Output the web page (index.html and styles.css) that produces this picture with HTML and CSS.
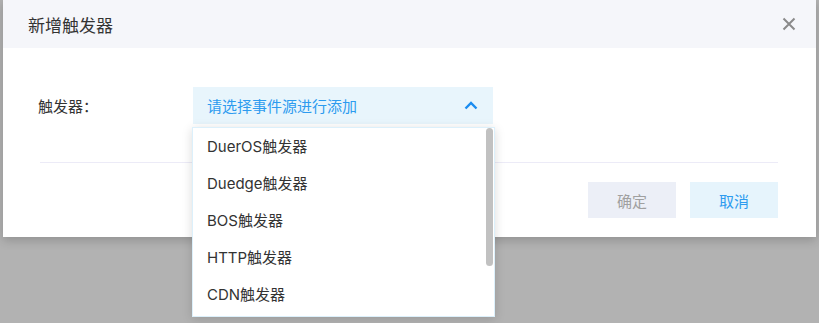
FILE: index.html
```html
<!DOCTYPE html>
<html lang="zh-CN">
<head>
    <meta charset="UTF-8">
    <title>新增触发器</title>
    <link rel="stylesheet" href="styles.css">
</head>
<body>
<div class="mask">
    <div class="dialog">
        <div class="dialog_head">
            <span class="dialog_title">新增触发器</span>
            <span class="dialog_close">
                <svg width="14" height="14" viewBox="0 0 14 14">
                    <path d="M1.5 1.5 L12.5 12.5 M12.5 1.5 L1.5 12.5" stroke="#8a8a8a" stroke-width="2" fill="none"/>
                </svg>
            </span>
        </div>
        <div class="dialog_body">
            <div class="form_row">
                <label class="form_label">触发器：</label>
                <div class="select">
                    <div class="select_box">
                        <span>请选择事件源进行添加</span>
                        <svg width="14" height="9" viewBox="0 0 14 9">
                            <path d="M1.5 7.5 L7 2 L12.5 7.5" stroke="#1a8cf0" stroke-width="2.4" fill="none"/>
                        </svg>
                    </div>
                    <div class="select_menu">
                        <ul class="select_list">
                            <li>DuerOS触发器</li>
                            <li>Duedge触发器</li>
                            <li>BOS触发器</li>
                            <li>HTTP触发器</li>
                            <li>CDN触发器</li>
                        </ul>
                        <div class="select_thumb"></div>
                    </div>
                </div>
            </div>
        </div>
        <div class="dialog_foot">
            <button class="btn btn_ok">确定</button>
            <button class="btn btn_cancel">取消</button>
        </div>
    </div>
</div>
</body>
</html>
```

FILE: styles.css
```css
body {
    margin: 0;
    font-family: "Inter", "Noto Sans CJK SC", sans-serif;
    color: #333333;
}

.mask {
    height: 323px;
    background-color: #b2b2b2;
    overflow: hidden;
    padding-left: 3px;
    padding-right: 3px;
}

.dialog {
    background-color: #ffffff;
    box-shadow: 0 3px 10px rgba(0, 0, 0, 0.2);
}

.dialog_head {
    height: 48px;
    background-color: #f5f6fa;
    display: flex;
    align-items: center;
    justify-content: space-between;
    padding: 0 20px 0 25px;
}

.dialog_title {
    font-size: 17px;
    color: #333333;
}

.dialog_close {
    display: flex;
}

.dialog_body {
    padding: 39px 38px 0 35px;
}

.form_row {
    display: flex;
    align-items: center;
    height: 37px;
}

.form_label {
    width: 155px;
    font-size: 15px;
    color: #333333;
}

.select {
    position: relative;
    width: 300px;
}

.select_box {
    height: 37px;
    background-color: #e8f5fc;
    display: flex;
    align-items: center;
    justify-content: space-between;
    padding: 0 15px 0 14px;
    font-size: 15px;
    color: #2d9bef;
}

.select_menu {
    position: absolute;
    z-index: 2;
    top: 40px;
    left: -1px;
    width: 301px;
    height: 188px;
    background-color: #ffffff;
    border: 1px solid #dcf0fb;
    box-shadow: 0 2px 10px rgba(0, 0, 0, 0.15);
    overflow: hidden;
}

.select_list {
    margin: 0;
    padding: 0;
    list-style: none;
}

.select_list li {
    height: 37px;
    line-height: 37px;
    padding-left: 14px;
    font-size: 15px;
    color: #333333;
}

.select_thumb {
    position: absolute;
    top: 0;
    right: 1px;
    width: 7px;
    height: 138px;
    background-color: #c1c1c1;
    border-radius: 4px;
}

.dialog_foot {
    margin: 38px 38px 0 37px;
    border-top: 1px solid #ecebf7;
    padding: 19px 0 19px;
    display: flex;
    justify-content: flex-end;
    gap: 14px;
}

.btn {
    width: 88px;
    height: 36px;
    border: none;
    font-family: "Inter", "Noto Sans CJK SC", sans-serif;
    font-size: 15px;
    cursor: pointer;
}

.btn_ok {
    background-color: #eceff7;
    color: #a0a0a0;
}

.btn_cancel {
    background-color: #e6f4fc;
    color: #2d9bef;
}
```
